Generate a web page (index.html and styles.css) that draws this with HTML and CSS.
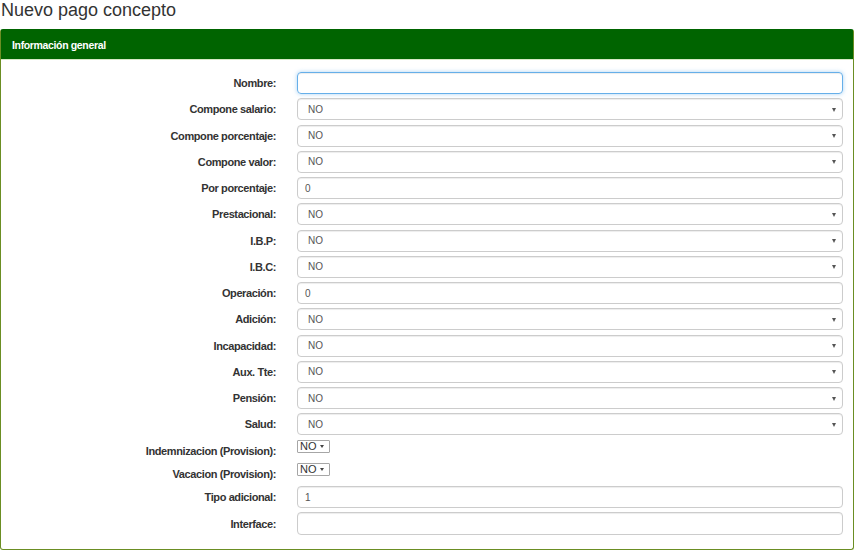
FILE: index.html
```html
<!DOCTYPE html>
<html lang="es">
<head>
<meta charset="utf-8">
<title>Nuevo pago concepto</title>
<link rel="stylesheet" href="styles.css">
</head>
<body>
<h1 class="title">Nuevo pago concepto</h1>
<div class="panel">
  <div class="panel-heading">Información general</div>
  <div class="panel-body">
    <div class="row"><label class="lbl">Nombre:</label><div class="ctrl input focus"></div></div>
    <div class="row"><label class="lbl">Compone salario:</label><div class="ctrl select"><span>NO</span><span class="caret"></span></div></div>
    <div class="row"><label class="lbl">Compone porcentaje:</label><div class="ctrl select"><span>NO</span><span class="caret"></span></div></div>
    <div class="row"><label class="lbl">Compone valor:</label><div class="ctrl select"><span>NO</span><span class="caret"></span></div></div>
    <div class="row"><label class="lbl">Por porcentaje:</label><div class="ctrl input">0</div></div>
    <div class="row"><label class="lbl">Prestacional:</label><div class="ctrl select"><span>NO</span><span class="caret"></span></div></div>
    <div class="row"><label class="lbl">I.B.P:</label><div class="ctrl select"><span>NO</span><span class="caret"></span></div></div>
    <div class="row"><label class="lbl">I.B.C:</label><div class="ctrl select"><span>NO</span><span class="caret"></span></div></div>
    <div class="row"><label class="lbl">Operación:</label><div class="ctrl input">0</div></div>
    <div class="row"><label class="lbl">Adición:</label><div class="ctrl select"><span>NO</span><span class="caret"></span></div></div>
    <div class="row"><label class="lbl">Incapacidad:</label><div class="ctrl select"><span>NO</span><span class="caret"></span></div></div>
    <div class="row"><label class="lbl">Aux. Tte:</label><div class="ctrl select"><span>NO</span><span class="caret"></span></div></div>
    <div class="row"><label class="lbl">Pensión:</label><div class="ctrl select"><span>NO</span><span class="caret"></span></div></div>
    <div class="row"><label class="lbl">Salud:</label><div class="ctrl select"><span>NO</span><span class="caret"></span></div></div>
    <div class="row small"><label class="lbl">Indemnizacion (Provision):</label><div class="mini-select"><span>NO</span><span class="caret"></span></div></div>
    <div class="row small"><label class="lbl">Vacacion (Provision):</label><div class="mini-select"><span>NO</span><span class="caret"></span></div></div>
    <div class="row"><label class="lbl">Tipo adicional:</label><div class="ctrl input">1</div></div>
    <div class="row last"><label class="lbl">Interface:</label><div class="ctrl input tall"></div></div>
  </div>
</div>
</body>
</html>
```
FILE: styles.css
```css
html, body {
  margin: 0;
  padding: 0;
  background: #fff;
}
body {
  font-family: "Liberation Sans", Arial, sans-serif;
  color: #333;
  width: 855px;
}
.title {
  margin: 0 0 9px 0;
  padding-left: 1px;
  font-size: 18px;
  line-height: 20px;
  font-weight: normal;
  color: #333;
}
.panel {
  width: 854px;
  box-sizing: border-box;
  border: 1px solid #6b8e23;
  border-top-color: #006400;
  border-radius: 3px;
  background: #fff;
}
.panel-heading {
  background: #006400;
  color: #fff;
  height: 30px;
  line-height: 30px;
  padding: 0 11px;
  font-size: 10.5px;
  font-weight: bold;
  letter-spacing: -0.35px;
  border-bottom: 1px solid #d6e9c6;
  box-sizing: border-box;
}
.panel-body {
  padding: 12px 10px 14px 0;
}
.row {
  display: flex;
  align-items: center;
  margin-bottom: 4.25px;
}
.row.last {
  margin-bottom: 0;
}
.row.small {
  align-items: flex-start;
  height: 19px;
}
.lbl {
  width: 275px;
  flex: none;
  margin-right: 21px;
  text-align: right;
  font-size: 11px;
  font-weight: bold;
  letter-spacing: -0.4px;
  line-height: 22px;
  color: #333;
}
.ctrl {
  flex: 1;
  height: 22px;
  box-sizing: border-box;
  border: 1px solid #ccc;
  border-radius: 4px;
  font-size: 10px;
  color: #555;
  display: flex;
  align-items: center;
  box-shadow: inset 0 1px 1px rgba(0, 0, 0, 0.075);
}
.ctrl.tall {
  height: 23px;
}
.input {
  padding-left: 7px;
}
.input.focus {
  border-color: #66afe9;
  box-shadow: inset 0 1px 1px rgba(0, 0, 0, 0.075), 0 0 4px rgba(102, 175, 233, 0.55);
}
.select {
  padding: 0 6px 0 10px;
  justify-content: space-between;
}
.caret {
  width: 0;
  height: 0;
  border-left: 2.5px solid transparent;
  border-right: 2.5px solid transparent;
  border-top: 4px solid #555;
  margin-top: 1px;
}
.mini-select {
  flex: none;
  width: 33px;
  height: 13px;
  box-sizing: border-box;
  border: 1px solid #a6a6a6;
  border-radius: 1px;
  display: flex;
  align-items: center;
  padding: 0 3px 0 2px;
  gap: 3px;
  font-size: 11px;
  line-height: 11px;
  color: #333;
}
.mini-select .caret {
  border-left-width: 2px;
  border-right-width: 2px;
  border-top-width: 3px;
  border-top-color: #444;
}
```
